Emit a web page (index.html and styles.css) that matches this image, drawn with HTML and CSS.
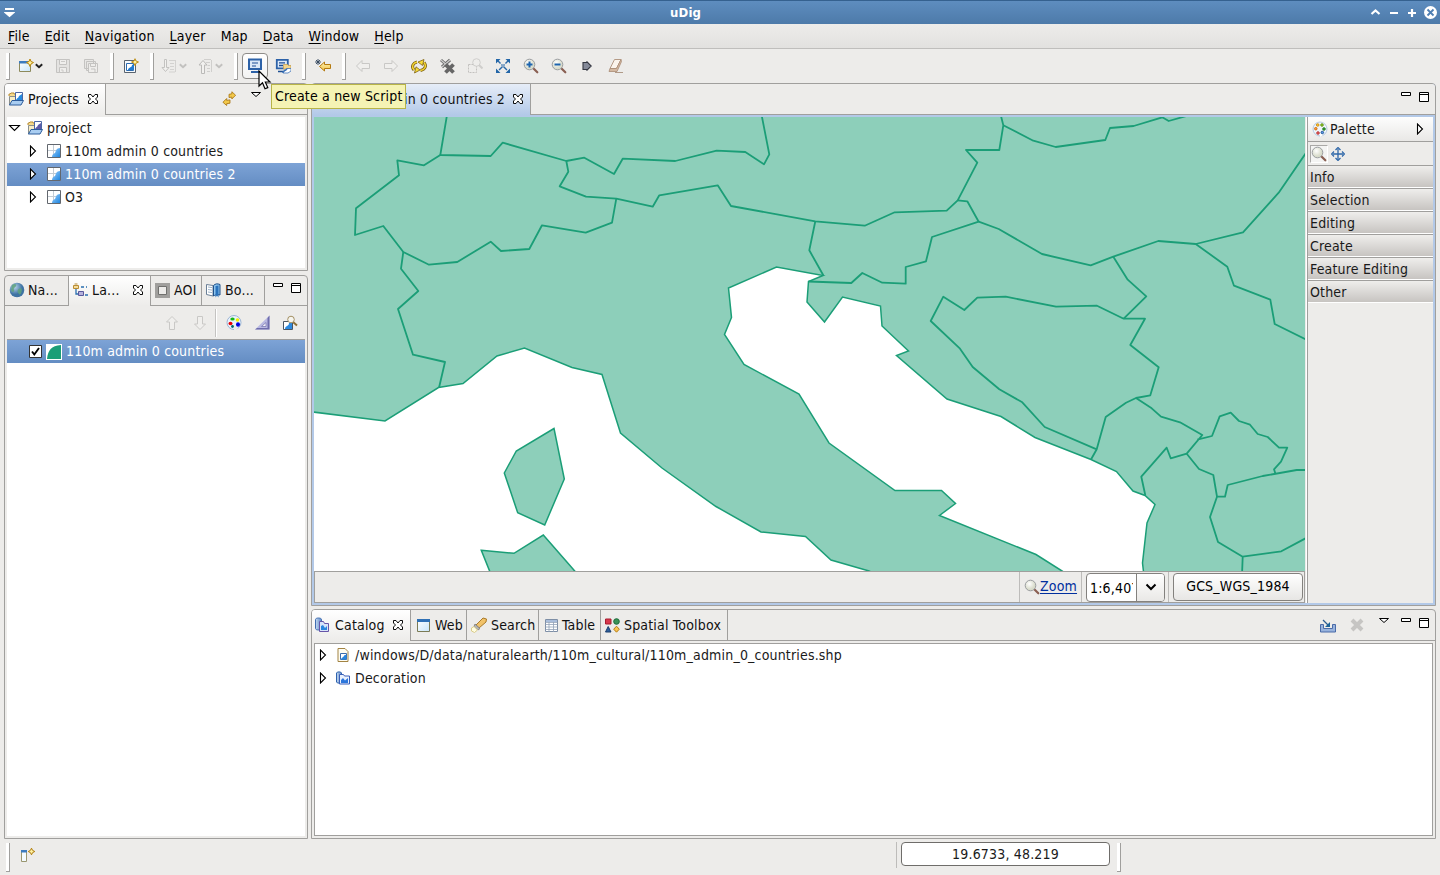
FILE: index.html
```html
<!DOCTYPE html>
<html lang="en">
<head>
<meta charset="utf-8">
<title>uDig</title>
<link rel="stylesheet" href="styles.css">
</head>
<body>
<svg class="defs" width="0" height="0">
  <defs>
    <linearGradient id="gBlue" x1="0" y1="0" x2="1" y2="1"><stop offset="0" stop-color="#9dd0fb"/><stop offset="1" stop-color="#1f86e0"/></linearGradient>
    <linearGradient id="gDoc" x1="0" y1="0" x2="1" y2="1"><stop offset="0" stop-color="#fff"/><stop offset="1" stop-color="#c9e6fa"/></linearGradient>
    <linearGradient id="gGold" x1="0" y1="0" x2="0" y2="1"><stop offset="0" stop-color="#fff3b8"/><stop offset="1" stop-color="#f0c040"/></linearGradient>
    <radialGradient id="gLens" cx=".4" cy=".35"><stop offset="0" stop-color="#fff"/><stop offset="1" stop-color="#d9dccb"/></radialGradient>
    <radialGradient id="gGlobe" cx=".35" cy=".3"><stop offset="0" stop-color="#b7d3ea"/><stop offset="1" stop-color="#3f73a3"/></radialGradient>
    <linearGradient id="gCyl" x1="0" x2="1" y1="0" y2="0"><stop offset="0" stop-color="#c6daf2"/><stop offset="1" stop-color="#5a85c4"/></linearGradient>
  </defs>
  <symbol id="close" viewBox="0 0 12 12"><path d="M1.500 1.500h2.500L6 4l2-2.500h2.500V4L8.500 6l2 2v2.500H8L6 8l-2 2.500H1.500V8l2-2-2-2z" fill="#fff" stroke="#000" stroke-width=".95"/></symbol>
  <symbol id="chev" viewBox="0 0 8 8"><path d="M.8 2.200 4 5.300 7.200 2.200" fill="none" stroke="currentColor" stroke-width="1.900"/></symbol>
  <symbol id="min" viewBox="0 0 12 12"><path d="M1.500 1.500h9v3h-9z" fill="#fff" stroke="#000"/></symbol>
  <symbol id="max" viewBox="0 0 12 12"><path d="M1.500 1.500h9v9h-9zM1 3.500h10" fill="#fff" stroke="#000"/></symbol>
  <symbol id="vmenu" viewBox="0 0 12 7"><path d="M1.500 1.500h9L6 5.500z" fill="#fff" stroke="#000"/></symbol>
  <symbol id="tri" viewBox="0 0 8 12"><path d="M1.500 1v10L6.500 6z" fill="#fff" stroke="#000" stroke-width="1.100"/></symbol>
  <symbol id="mapi" viewBox="0 0 14 14"><path d="M.5.500h13v13H.5z" fill="#fff" stroke="#62676e"/><path d="M6.500 1v12M1 6.500h12" stroke="#c3ccd5" fill="none"/><path d="M5 13c.3-2.500 1-3.200 2.200-3.600C8.800 8.800 8.500 7 9.200 6c.8-1.300 2-2 3.800-2v9z" fill="url(#gBlue)"/></symbol>
  <symbol id="folder" viewBox="0 0 16 14"><path d="M1 4V2h1l1-1h3v1h2v2" fill="#f5d98b" stroke="#b98d34"/><path d="M1.500 13V4.500h7V9z" fill="#f9edc4" stroke="#8a8f8c"/><path d="M7.500.500h7v8h-7z" fill="#fff" stroke="#4b66a4"/><path d="M8 9c0-3 2-2 3-5l3-2v7z" fill="var(--sea,#2689de)"/><path d="M1.500 13 4 8.500h11.500L13 13z" fill="#a9cdf1" stroke="#2c5c9b"/></symbol>
  <symbol id="lens" viewBox="0 0 16 16"><path d="m10.500 10.500 3.800 3.800" stroke="#8a5f52" stroke-width="2.200" stroke-linecap="round"/><circle cx="6.500" cy="6.500" r="5.300" fill="url(#gLens)" stroke="#9a9da0"/></symbol>
  <symbol id="palette" viewBox="0 0 16 16"><circle cx="8" cy="8" r="7" fill="#eef4fb" stroke="#b5c8e0"/><path d="M8 16V9l3 5z" fill="#fff"/><g stroke-width=".8"><circle cx="5.700" cy="4" r="1.300" fill="#f8c43c" stroke="#c80"/><circle cx="10" cy="4" r="1.300" fill="#9cd03e" stroke="#580"/><circle cx="3.800" cy="7.700" r="1.300" fill="#fb9a3c" stroke="#c60"/><circle cx="12" cy="8" r="1.300" fill="#44b944" stroke="#161"/><circle cx="6" cy="12" r="1.300" fill="#f46b6b" stroke="#a22"/><circle cx="10.300" cy="11.500" r="1.300" fill="#589ae8" stroke="#148"/></g></symbol>
  <symbol id="floppy" viewBox="0 0 16 16"><path d="M1.500 1.500h13v13h-13z" fill="#e4e3e1" stroke="#c4c3c1"/><path d="M4.500 1.500h7v5h-7zM4.500 9.500h7v5h-7z" fill="#efeeec" stroke="#c4c3c1"/><path d="M6 3.500h4M6 12h2v2" stroke="#cbcac8" fill="none"/></symbol>
  <symbol id="arrowL" viewBox="0 0 16 16"><path d="M1.500 8 7 2.500V5.500h7.500v5H7v3z" fill="#f0efed" stroke="#c9c8c6"/></symbol>
  <symbol id="sync" viewBox="0 0 16 16"><path d="M14.500 4.500 10.500 8.500V6.500L7.500 7V3.500l3-.5V.8zM1 12l4-4v2l3.500-.5V13L5 13.500v2z" fill="#f2c84a" stroke="#a97512" stroke-width=".9"/></symbol>
  <symbol id="catalog" viewBox="0 0 16 16"><path d="M1.500 2.500c0-2 6-2 6 0v9c0 2-6 2-6 0z" fill="url(#gCyl)" stroke="#3f6db0"/><path d="M5.500 4.500h4l1 2h4v8h-9z" fill="#d8e4fa" stroke="#6655a8"/><path d="M7 13V9l2-1 2 3 2-2v4z" fill="#2b86de"/></symbol>
</svg>

<div class="app">
  <header class="titlebar">
    <svg class="wmenu" width="11" height="10" viewBox="0 0 11 10"><path d="M1 1h9M2 5l3.500 3L9 5z" stroke="#fff" stroke-width="1.800" fill="#fff"/></svg>
    <span class="wtitle">uDig</span>
    <svg class="wbtns" width="68" height="16" viewBox="0 0 68 16"><g fill="none" stroke="#fff" stroke-width="2.200"><path d="M1.500 9 5.500 5.500l4 3.500M20 8h8M38 8h8M42 4v8"/></g><circle cx="60.500" cy="7.500" r="6.500" fill="#fff"/><path d="m57.500 4.500 6 6m0-6-6 6" stroke="#4e7fb3" stroke-width="1.800"/></svg>
  </header>

  <nav class="menubar">
    <span><u>F</u>ile</span><span><u>E</u>dit</span><span><u>N</u>avigation</span><span><u>L</u>ayer</span><span>Map</span><span><u>D</u>ata</span><span><u>W</u>indow</span><span><u>H</u>elp</span>
  </nav>

  <div class="toolbar">
    <i class="grip"></i>
    <div class="drop"><svg width="16" height="16" viewBox="0 0 16 16"><path d="M1.500 3.500h11v10h-11z" fill="url(#gDoc)" stroke="#8d8a5c"/><path d="M1 3h9v2.500H1z" fill="#3c7cbf"/><path d="m12 1 1 2.500L15.500 4.500 13 6l-1 2.500L11 6 8.500 4.500 11 3.500z" fill="#fdf0a0" stroke="#b8860b"/></svg><svg class="c" width="8" height="8"><use href="#chev"/></svg></div>
    <div class="tb"><svg width="16" height="16"><use href="#floppy"/></svg></div>
    <div class="tb"><svg width="16" height="16" viewBox="0 0 16 16"><path d="M1.500 1.500h9v9h-9zM3.500 3.500h9v9h-9z" fill="#e8e7e5" stroke="#c4c3c1"/><path d="M5.500 5.500h9v9h-9zM7.500 5.500h5v3h-5zM8 11h4v3" fill="#eeedeb" stroke="#c4c3c1"/></svg></div>
    <i class="grip"></i>
    <div class="tb"><svg width="16" height="16" viewBox="0 0 16 16"><path d="M1.500 2.500h11v12h-11z" fill="#f6fafd" stroke="#59636f"/><path d="M3.500 5.500h7v7h-7z" fill="#fff" stroke="#2c6bb0"/><path d="M5 12c0-3 4-2 4-5l2-1v6z" fill="#1f7ad0"/><path d="m12 .7 1 2.300 2.500 1L13 5.200l-1 2.500-1-2.500L8.500 4 11 3z" fill="#fdf0a0" stroke="#b8860b" stroke-width=".9"/></svg></div>
    <i class="grip"></i>
    <div class="drop off"><svg width="16" height="16" viewBox="0 0 16 16"><path d="M3.500 1.500h2v8h2.500l-3.500 4-3.500-4h2.500z" fill="#f2f1ef" stroke="#c3c2c0"/><path d="M8 2.500h6M9 5.500h4M9 8.500h4M9 11.500h4M8 14h6M14.500 2v12" stroke="#d3d2d0"/></svg><svg class="c" width="8" height="8"><use href="#chev"/></svg></div>
    <div class="drop off"><svg width="16" height="16" viewBox="0 0 16 16"><path d="M4.500 15.500h3V7H10L6 2.500 2 7h2.500z" fill="#f2f1ef" stroke="#bbbab8"/><path d="M7 1.500h7M9 4.500h4M10.500 7.500H13M10 10.500h3M10 13.500h3M14.500 2v12" stroke="#d0cfcd"/></svg><svg class="c" width="8" height="8"><use href="#chev"/></svg></div>
    <i class="grip"></i>
    <div class="tb hot"><svg width="16" height="16" viewBox="0 0 16 16"><path d="M2 1.500h12v9.500H2z" fill="#dce9f8" stroke="#2d62a8" stroke-width="2"/><path d="M5 5h6M5 8h4" stroke="#1f4f94" stroke-width="1.200"/><path d="M4 14h9" stroke="#2d62a8" stroke-width="2"/></svg></div>
    <div class="tb"><svg width="16" height="16" viewBox="0 0 16 16"><path d="M1.800 1.800h11v8.500h-11z" fill="#dce9f8" stroke="#2d62a8" stroke-width="1.800"/><path d="M4 4.800h6M4 7.500h4M3 13.500h5" stroke="#1f4f94" stroke-width="1.300"/><path d="M8.500 6.500h4l1 1H16v3.500H8.500z" fill="#f3d58c" stroke="#c29a45" stroke-width=".7"/><path d="M8 15c0-3.500 3-1.500 4-4.500h4V13l-3 2z" fill="#fff" stroke="#3f74b8" stroke-width=".8"/><path d="M8 15c0-3.500 3-1.500 4-4.500" fill="none" stroke="#3f74b8" stroke-width="1.500"/></svg></div>
    <i class="grip"></i>
    <div class="tb"><svg width="18" height="16" viewBox="0 0 18 16"><path d="m5.500 8.500 5-4.500v2.500h6v4h-6V13z" fill="url(#gGold)" stroke="#b57a10"/><path d="M4 1v6M1 4h6M2 2l4 4m0-4L2 6" stroke="#31465e" stroke-width=".9"/></svg></div>
    <i class="grip"></i>
    <div class="tb"><svg width="16" height="16"><use href="#arrowL"/></svg></div>
    <div class="tb"><svg class="flip" width="16" height="16"><use href="#arrowL"/></svg></div>
    <div class="tb"><svg width="18" height="16" viewBox="0 0 18 16"><g fill="none"><path d="M4 12C1 8.500 3 5 7 4M14 4.500c3 3.500 1 7-3.500 8" stroke="#7d6112" stroke-width="3"/><path d="M4 12C1 8.500 3 5 7 4M14 4.500c3 3.500 1 7-3.500 8" stroke="#f5d632" stroke-width="1.400"/></g><path d="m14 1.500-1.500 6-4.500-3.500zM4.500 15 6 8.800l4 3.200z" fill="#f7dc3a" stroke="#7d6112" stroke-width=".8"/></svg></div>
    <div class="tb"><svg width="17" height="16" viewBox="0 0 17 16"><path d="m2 2 9 8m0-8-8 7" stroke="#666" stroke-width="3"/><path d="m2 2 9 8m0-8-8 7" stroke="#ccc" stroke-width="1.300"/><path d="m6.500 6.500 8 8m0-8-8 8" stroke="#666" stroke-width="3.800"/></svg></div>
    <div class="tb"><svg width="16" height="16" viewBox="0 0 16 16"><path d="M1.500 6.500h8v8h-8z" fill="#eeedeb" stroke="#c2c1bf" stroke-dasharray="2 1"/><circle cx="9.500" cy="4.500" r="3.800" fill="#eeedeb" stroke="#cfcecc"/><path d="m12 7 3.500 3.500" stroke="#cfcecc" stroke-width="2"/></svg></div>
    <div class="tb"><svg width="16" height="16" viewBox="0 0 16 16"><path d="m2 2 12 12M14 2 2 14" stroke="#2b69a8" stroke-width="1.400" stroke-dasharray="5 1.300 1.500 1.300"/><path d="M1 1h4.500L1 5.500zM15 1v4.500L10.500 1zM1 15v-4.500L5.500 15zM15 15h-4.500l4.500-4.500z" fill="#2366a8"/></svg></div>
    <div class="tb"><svg width="16" height="16" viewBox="0 0 16 16"><use href="#lens"/><path d="M3.500 6.500h6M6.500 3.500v6" stroke="#1d64ad" stroke-width="2"/></svg></div>
    <div class="tb"><svg width="16" height="16" viewBox="0 0 16 16"><use href="#lens"/><path d="M3.500 6.500h6" stroke="#1d64ad" stroke-width="2"/></svg></div>
    <div class="tb"><svg width="10" height="10" viewBox="0 0 10 10"><path d="M1 1.500h4V.8L9.200 5 5 9.200v-.7H1z" fill="#858a99" stroke="#343741" stroke-width="1.100"/></svg></div>
    <div class="tb"><svg width="16" height="16" viewBox="0 0 16 16"><path d="M7.500 1.500h6.500l-4.500 9H3z" fill="#fbf4ec" stroke="#b49a86"/><path d="M3 10.500h6.500L14 1.500l.5 2L10 13.500H2z" fill="#d4b9a2" stroke="#a98b75" stroke-width=".8"/><path d="M8 14.500h8" stroke="#b09a88"/></svg></div>
  </div>

  <main class="work">
    <div class="left">
      <section class="panel projects">
        <div class="tabs">
          <div class="tab on"><svg width="16" height="14"><use href="#folder"/></svg><span>Projects</span><svg class="x" width="12" height="12"><use href="#close"/></svg></div>
          <div class="tools"><svg class="sync" width="15" height="15"><use href="#sync"/></svg><svg class="vm" width="12" height="7"><use href="#vmenu"/></svg></div>
        </div>
        <div class="tree">
          <div class="row root"><svg class="t" width="13" height="8" viewBox="0 0 13 8"><path d="M1.500 1.500h10l-5 5z" fill="#fff" stroke="#000" stroke-width="1.100"/></svg><svg class="ic" width="16" height="14"><use href="#folder"/></svg><span>project</span></div>
          <div class="row"><svg class="t" width="8" height="12"><use href="#tri"/></svg><svg class="ic" width="14" height="14"><use href="#mapi"/></svg><span>110m admin 0 countries</span></div>
          <div class="row sel"><svg class="t" width="8" height="12"><use href="#tri"/></svg><svg class="ic" width="14" height="14"><use href="#mapi"/></svg><span>110m admin 0 countries 2</span></div>
          <div class="row"><svg class="t" width="8" height="12"><use href="#tri"/></svg><svg class="ic" width="14" height="14"><use href="#mapi"/></svg><span>O3</span></div>
        </div>
      </section>

      <section class="panel layers">
        <div class="tabs">
          <div class="tab t-na"><svg width="16" height="16" viewBox="0 0 16 16"><circle cx="8" cy="8" r="7.300" fill="url(#gGlobe)"/><path d="M3 3c3-2 5-1 4 1S4 6 5 8s-2 3-3 0zM9.500 7c3-2 4 0 3 3s-2 3-3 1.500-1.500-2.500 0-4.500z" fill="#5fa37c" opacity=".85"/></svg><span>Na...</span></div>
          <div class="tab on t-la"><svg width="16" height="14" viewBox="0 0 16 14"><path d="M.5 2.500h5v3h-5z" fill="#f6dc9b" stroke="#b98d34"/><path d="M1.500 1h3" stroke="#b98d34"/><path d="M3 6v5h3M8 4h3m2 0h1M12 12h3" stroke="#2a6fb0" fill="none" stroke-width="1.300"/><path d="M5.500 8.500h5v4h-5z" fill="#b5b1dc" stroke="#59589b"/></svg><span>La...</span><svg class="x" width="12" height="12"><use href="#close"/></svg></div>
          <div class="tab t-aoi"><svg width="15" height="15" viewBox="0 0 15 15"><path d="M0 0h15v15H0z" fill="#a09f9d"/><path d="M3.500 3.500h8v8h-8z" fill="#ecebe9" stroke="#70706e"/></svg><span>AOI</span></div>
          <div class="tab t-bo"><svg width="15" height="15" viewBox="0 0 15 15"><path d="M.5 1.500 7 2.500V13L.5 11.500z" fill="#fff" stroke="#6a7f96"/><path d="M2 4l4 .6M2 6.500l4 .6M2 9l4 .6" stroke="#9db3c9"/><path d="M7.500 2.500c2-2 4-2 6.500-1v10.500c-3-1-5 0-6.500 1z" fill="#8cc4ef" stroke="#1f4f87"/><path d="M9.500 3v11.500l1.500-2 1.500 2V2.500z" fill="#2a72bb"/></svg><span>Bo...</span></div>
          <div class="tools"><svg width="12" height="12"><use href="#min"/></svg><svg class="mx" width="12" height="12"><use href="#max"/></svg></div>
        </div>
        <div class="subbar">
          <svg class="up" width="16" height="16"><use href="#arrowL"/></svg>
          <svg class="down" width="16" height="16"><use href="#arrowL"/></svg>
          <i class="sep"></i>
          <svg class="pal" width="16" height="16" viewBox="0 0 16 16"><circle cx="8" cy="7.500" r="7" fill="#eaf2fb" stroke="#9cb4d4"/><path d="M8 16V9l4 5z" fill="#ecebe9"/><ellipse cx="4.500" cy="8.500" rx="2" ry="1.800" fill="#e80000"/><ellipse cx="6.500" cy="4" rx="2.200" ry="1.600" fill="#16b616"/><circle cx="11.500" cy="5" r="1.800" fill="#f4ee00"/><ellipse cx="12" cy="9.500" rx="2" ry="2.300" fill="#0000e0"/><circle cx="6.500" cy="11.500" r="1.400" fill="#006868"/></svg>
          <svg class="sq" width="17" height="16" viewBox="0 0 17 16"><path d="M15.500.500v14H1z" fill="#b9b9e2"/><path d="M15.500.500v14H1l2-1.500h10.500V3z" fill="#6e6cac"/><path d="M12 7.500v4H7.500z" fill="#f4f4f8" stroke="#7c7ab4" stroke-width=".8"/></svg>
          <svg class="zl" width="16" height="16" viewBox="0 0 16 16"><path d="M1.500 6.500h9v8h-9z" fill="#fff" stroke="#4a5664"/><path d="M3 14c0-4 4-2 4-6h3v6z" fill="#2c8ae0"/><path d="m11 7 4 3.500" stroke="#8f7035" stroke-width="2"/><circle cx="9" cy="4.500" r="3.300" fill="#f6f5ee" stroke="#a38f63"/></svg>
        </div>
        <div class="tree">
          <div class="row sel"><svg class="chk" width="13" height="13" viewBox="0 0 13 13"><path d="M.5.500h12v12H.5z" fill="#fff" stroke="#333"/><path d="m3 6.500 2.300 3L10 3" fill="none" stroke="#000" stroke-width="1.900"/></svg><svg class="ic" width="16" height="16" viewBox="0 0 16 16"><path d="M0 0h16v16H0z" fill="#fff"/><path d="M1 15C2 6 5 2 15 1v14z" fill="#1b9e77"/></svg><span>110m admin 0 countries</span></div>
        </div>
      </section>
    </div>

    <div class="right">
      <section class="panel editor">
        <div class="tabs">
          <div class="tab blue"><svg width="14" height="14"><use href="#mapi"/></svg><span>110m admin 0 countries 2</span><svg class="x" width="12" height="12"><use href="#close"/></svg></div>
          <div class="tools"><svg width="12" height="12"><use href="#min"/></svg><svg class="mx" width="12" height="12"><use href="#max"/></svg></div>
        </div>
        <div class="edbody">
          <div class="mapcol">
            <svg class="map" viewBox="314 117 991 454">
              <g fill="#8dcfba" stroke="#1b9e77" stroke-width="1.500">
                <path d="M309 411.500 385 421 438.500 387.500 463 383.500 497 356 524.500 348 572 367.500 602 374.500 620.500 433 662 468 716 506.500 761 532 805.500 536.500 831 560 869 571 880 576H1070L1062 571 1036 554.500 939.500 515.500 955.500 503.500 941.500 490.500H895L829 443 799 394 744 364.500 724.500 334.500 731.500 317.500 728.500 288 776.500 267 823 275.500 808.500 281.500 807 302 824.500 322 842.500 297 880.500 306 882 326 908.500 351 896.500 355.500 947 399 1001 416.500 1035 437.500 1091 459.500 1116.500 471.500 1133 491 1145 495.500 1155 504.500 1147 523 1142.500 563 1144 576H1312V110H305z"/>
                <path d="M554 428.500 516.300 451 504.300 473 517.700 512.700 544.700 525 564.300 479z"/>
                <path d="M481.300 550.300 514 553.300 543.300 535 580 577H492z"/>
              </g>
              <g fill="none" stroke="#1b9e77" stroke-width="1.800" stroke-linejoin="round">
                <path d="M447.500 112 440.300 155 490.700 156 502.700 142.700 566.300 161 584.300 157.700 614 174 622.700 158.700 675.300 161 716.700 150.700 745.300 152 764 164.300 769.300 154.300 761 112"/>
                <path d="M440.300 155 424 165.300 397.300 160.300 399 175.300 356 208.300 355 235 383.300 226 403.300 252 429 264.700 457.300 262 490.700 241.700 501 251 529.300 249 542 225.300 585.700 232.700 612 222.700 616.300 198.700"/>
                <path d="M566.300 161 568.300 171.700 559.700 186.300 586 196.700 616.300 198.700 652.700 206.700 659.300 195.300 717.700 185.300 731 206 815.300 221.300 864.700 225.700 894.700 212.300 946.700 210.700 957.700 200.300 977.300 162.700 966 150H999.300L1003.300 125.300 1000 112"/>
                <path d="M403.300 252 401 268.700 418.300 291 398 309 413 354.700 445 362 439 387.700M815.300 221.300 809.300 250.300 823.300 275.300M808.500 281.500 851.300 283 862.300 273 882.300 282.700 905.700 283.700V267L926 261.300 932 237 978.700 221.700 967.300 201.300 957.700 200.300"/>
                <path d="M978.700 221.700 998.700 229 1042 254 1090.700 265.300 1113.300 256.700 1158.300 241 1195.700 244 1243 232.300 1278.700 192.700 1308 150M1003.300 125.300 1033.300 140.700 1055.700 147 1105.300 140 1110 128 1133.700 126 1162.300 117.300 1168.700 121 1190 115"/>
                <path d="M1195.700 244 1227.300 266.700 1234 285.700 1270.300 299.700 1274.700 324 1308 340.500M1113.300 256.700 1127.700 279.700 1146.300 296.300 1123.700 318.700"/>
                <path d="M1123.700 318.700 1097 305.700 1056 306.700 1005.700 296.700 977.300 297.700 964.300 310 943.300 296.700 930.700 321 960 348.700 972.700 367 999.300 389.300 1022.300 402.300 1044.700 427 1096.700 449.300 1105.700 417 1126 402.700 1136 398 1150.300 395.300 1158.700 367.300 1130.300 345 1145 318.700zM1096.700 449.300 1091 459.500"/>
                <path d="M1136 398 1151.700 408.300 1161 416.700 1180 422.300 1202.300 435 1186.700 453.700 1170.700 458.300 1166.700 447.700 1141.300 476.700 1145.300 495.300M1197.300 439.700 1212 436 1219.700 416.300 1230.700 412.700 1239 421 1250 424.700 1257.700 434 1267.700 437 1279 447.700H1287.300L1281 461.700 1274 469.300 1275.300 473.300"/>
                <path d="M1186.700 453.700 1199 469 1213.300 475 1217 496.700H1225L1227.700 485 1262.700 476 1296.700 470H1308M1217 496.700 1210 517 1218 542 1242.700 556.700 1281.300 551.300 1308 537M1242.700 556.700 1242 575"/>
              </g>
            </svg>
            <div class="mapbar">
              <div class="zoomlink"><svg width="16" height="16"><use href="#lens"/></svg><span>Zoom</span></div>
              <div class="cell c1"><div class="combo"><div class="val"><div>1:6,407</div></div><div class="arr"><svg width="14" height="10" viewBox="0 0 14 10"><path d="m2.500 2.500 4.500 4.500 4.500-4.500" fill="none" stroke="#000" stroke-width="2"/></svg></div></div></div>
              <div class="cell c2"><div class="crs">GCS_WGS_1984</div></div>
            </div>
          </div>
          <aside class="pal-side">
            <div class="pal-head"><svg width="16" height="16"><use href="#palette"/></svg><span>Palette</span><svg class="t" width="8" height="12"><use href="#tri"/></svg></div>
            <div class="pal-tools"><div class="pressed"><svg width="16" height="16"><use href="#lens"/></svg></div><svg width="14" height="14" viewBox="0 0 14 14"><path d="M7 2v10M2 7h10" stroke="#2d66a8" stroke-width="1.300"/><path d="M4.500 3 7 .5 9.500 3M4.500 11 7 13.500 9.500 11M3 4.500.500 7 3 9.500M11 4.500 13.500 7 11 9.500" fill="none" stroke="#2d66a8" stroke-width="1.200"/></svg></div>
            <div class="drawer">Info</div><div class="drawer">Selection</div><div class="drawer">Editing</div><div class="drawer">Create</div><div class="drawer">Feature Editing</div><div class="drawer">Other</div>
          </aside>
        </div>
      </section>

      <section class="panel catalog">
        <div class="tabs">
          <div class="tab on t-cat"><svg width="16" height="16"><use href="#catalog"/></svg><span>Catalog</span><svg class="x" width="12" height="12"><use href="#close"/></svg></div>
          <div class="tab t-web"><svg width="13" height="13" viewBox="0 0 13 13"><path d="M.5.500h12v12H.5z" fill="url(#gDoc)" stroke="#7b7b55"/><path d="M0 0h13v3H0z" fill="#2f70b5"/></svg><span>Web</span></div>
          <div class="tab t-search"><svg width="16" height="16" viewBox="0 0 16 16"><path d="m5 8 7-7 3.500 1L15 5 8 11z" fill="#f1c269" stroke="#a97a2a"/><path d="m4 7 5 4.500-2 1.500-4-3.500z" fill="#b3b3b3" stroke="#888"/><path d="M3 9.500 6.500 13 3.500 15.500.5 14V11z" fill="#fffde0" stroke="#d9cb8a"/></svg><span>Search</span></div>
          <div class="tab t-table"><svg width="13" height="13" viewBox="0 0 13 13"><path d="M.5.500h12v12H.5z" fill="#fff" stroke="#7e8fa6"/><path d="M1 1h11v2H1z" fill="#a9bddb"/><path d="M.5 3.500h12M.5 5.500h12M.5 8h12M.5 10.500h12M4 3v10M8.500 3v10" stroke="#93a2b8" stroke-width=".8"/></svg><span>Table</span></div>
          <div class="tab t-tool"><svg width="15" height="15" viewBox="0 0 15 15"><path d="M.5 1h5.500v5H.5z" fill="#d8394d" stroke="#a71c30"/><circle cx="11.500" cy="3.500" r="2.800" fill="#3b9258" stroke="#1d6b38"/><path d="M3.200 8.500 6 14H.5z" fill="#2d5f9c" stroke="#1b3d6d"/><path d="m11.500 8.200 2.800 3-2.800 3-2.800-3z" fill="#f9c552" stroke="#b47b14"/></svg><span>Spatial Toolbox</span></div>
          <div class="tools"><svg class="imp" width="18" height="14" viewBox="0 0 18 14"><path d="M1.500 5.500h3v4h9v-4h3v7.500h-15z" fill="#98b3dd" stroke="#4a6ba8"/><path d="m4 1 6 6" stroke="#2a5c91" stroke-width="1.300"/><path d="M11 3v5H6z" fill="#1c6399"/></svg><svg class="del" width="14" height="14" viewBox="0 0 14 14"><path d="m2 2 10 10M12 2 2 12" stroke="#c6c5c3" stroke-width="4"/></svg><svg class="vm" width="12" height="7"><use href="#vmenu"/></svg><svg class="mn" width="12" height="12"><use href="#min"/></svg><svg class="mx" width="12" height="12"><use href="#max"/></svg></div>
        </div>
        <div class="tree framed">
          <div class="row"><svg class="t" width="8" height="12"><use href="#tri"/></svg><svg class="ic" width="14" height="14" viewBox="0 0 14 14"><path d="M2 .5h7l3 3v10H2z" fill="#fffdf2" stroke="#a28342"/><path d="M4.500 5.500h6v6h-6z" fill="#fff" stroke="#3b6cab"/><path d="M5 11.500c1-3 3-2 3-4l2.500-1v5z" fill="#2a85dc"/></svg><span>/windows/D/data/naturalearth/110m_cultural/110m_admin_0_countries.shp</span></div>
          <div class="row"><svg class="t" width="8" height="12"><use href="#tri"/></svg><svg class="ic" width="14" height="14" viewBox="0 0 14 14"><path d="M.5 2c0-1.500 5-1.500 5 0v9c0 1.500-5 1.500-5 0z" fill="url(#gCyl)" stroke="#2d63ae"/><path d="M3.500 3.500h4l1 1.500h5v8h-10z" fill="#e9f1fd" stroke="#3a5fb8"/><path d="M5 12V9l2-2 2 2.500 3-2.500v5z" fill="#2b76dc"/></svg><span>Decoration</span></div>
        </div>
      </section>
    </div>
  </main>

  <footer class="status">
    <i class="grip"></i>
    <svg class="fast" width="16" height="16" viewBox="0 0 16 16"><path d="M1.500 3.500h5v11h-5z" fill="#f3fbff" stroke="#9a9670"/><path d="M1 3h6v2.500H1z" fill="#3c7cbf"/><path d="m11.500 1.200 1.100 2.200 2.200 1.100-2.200 1.100-1.100 2.200-1.100-2.200-2.200-1.100 2.200-1.100z" fill="#fdf0a0" stroke="#b07c0b"/></svg>
    <i class="line"></i>
    <div class="coords">19.6733, 48.219</div>
    <i class="grip g2"></i>
  </footer>

  <div class="tooltip">Create a new Script</div>
  <svg class="cursor" width="14" height="21" viewBox="0 0 14 21"><path d="M1 1v15l3.500-3.300L7 18.800l2.800-1.200L7.300 12H12z" fill="#fff" stroke="#000" stroke-width="1.200"/></svg>
</div>
</body>
</html>
```
FILE: styles.css
```css
* { box-sizing: border-box; }
html, body { margin: 0; height: 100%; overflow: hidden; }
body {
  font-family: "DejaVu Sans Condensed", "DejaVu Sans", sans-serif;
  font-stretch: condensed;
  font-size: 14px;
  letter-spacing: .18px;
  line-height: 16px;
  color: #1a1a1a;
  background: #edecea;
  white-space: nowrap;
}
svg { display: block; flex: none; }
.defs { position: absolute; }
.app { position: relative; width: 1440px; height: 875px; display: flex; flex-direction: column; background: #edecea; }

/* window chrome */
.titlebar { height: 24px; display: flex; align-items: center; padding: 1px 2px 0 4px; background: linear-gradient(#5e8dbf, #4d7aa9); border-top: 1px solid #35618f; color: #fff; }
.wtitle { font-weight: bold; font-size: 13px; margin-left: 655px; }
.wbtns { margin-left: auto; }
.menubar { height: 25px; display: flex; gap: 15px; padding: 4px 8px 0; background: linear-gradient(#edecea, #e2e1df); border-bottom: 1px solid #bfbebc; color: #000; }
.menubar u { text-underline-offset: 2px; }

.toolbar { height: 34px; display: flex; align-items: center; padding-left: 1px; }
.grip { width: 12px; height: 26px; flex: none; display: block; }
.grip::before { content: ""; display: block; width: 3px; height: 26px; margin-left: 5px; background: #fff; border-right: 1px solid #a09f9d; border-bottom: 1px solid #a09f9d; }
.tb { width: 28px; height: 28px; display: flex; align-items: center; justify-content: center; flex: none; }
.hot { width: 26px; height: 26px; margin: 0 1px; background: linear-gradient(#fff, #f3f3f2); border: 1px solid #8e8c89; border-radius: 4px; }
.drop { width: 36px; display: flex; align-items: center; padding-left: 5px; gap: 1px; flex: none; color: #222; }
.off { color: #c2c1bf; gap: 2px; padding-left: 4px; }
.flip { transform: scaleX(-1); }

/* workbench */
.work { flex: 1; min-height: 0; display: flex; gap: 3px; padding: 0 4px; }
.left { width: 304px; display: flex; flex-direction: column; gap: 4px; }
.right { flex: 1; min-width: 0; display: flex; flex-direction: column; gap: 3px; }
.panel { border: 1px solid #a09f9d; border-radius: 4px 4px 0 0; display: flex; flex-direction: column; min-height: 0; overflow: hidden; }
.tabs { height: 31px; flex: none; display: flex; align-items: stretch; border-bottom: 1px solid #a09f9d; color: #111; }
.tab { display: flex; align-items: center; border-right: 1px solid #a09f9d; padding-left: 4px; flex: none; overflow: hidden; }
.tab span { margin-left: 4px; }
.tab .x { margin-left: 7px; }
.tab.on { background: linear-gradient(#fff, #edecea); margin-bottom: -1px; padding-bottom: 1px; }
.tools { display: flex; align-items: flex-start; margin-left: auto; padding-top: 7px; }

.projects { height: 188px; }
.projects .tab { width: 101px; padding-left: 3px; }
.projects .tab .x { margin-left: 8px; }
.projects .tools { padding-right: 45px; }
.projects .sync { margin-right: 13px; }
.tree { flex: 1; margin: 2px; background: #fff; min-height: 0; }
.row { height: 23px; display: flex; align-items: center; padding-left: 22px; }
.row .t { margin-top: -2px; }
.row .ic { margin-left: 10px; margin-top: -1px; }
.row span { margin-left: 4px; margin-top: -2px; }
.row.root { padding-left: 1px; }
.root .ic { margin-left: 6px; --sea: #5d5aa8; }
.sel { background: linear-gradient(#7da3d6, #648dc3); color: #fff; }

.layers { height: 564px; }
.layers .tabs { height: 30px; }
.layers .tab { padding-bottom: 1px; }
.layers .tab.on { padding-bottom: 2px; }
.t-na { width: 64px; }
.t-na span { margin-left: 3px; }
.t-la { width: 82px; }
.t-la span { margin-left: 3px; }
.t-la .x { margin-left: 12px; }
.t-aoi { width: 51px; }
.t-bo { width: 63px; }
.layers .tools { padding-right: 5px; padding-top: 6px; }
.mx { margin-left: 6px; }
.subbar { height: 33px; flex: none; display: flex; align-items: center; padding: 1px 9px 0 0; justify-content: flex-end; }
.up { transform: rotate(90deg); margin-right: 12px; }
.down { transform: rotate(-90deg); margin-right: 7px; }
.sep { width: 2px; height: 28px; background: #fff; border-left: 1px solid #c4c3c1; margin-right: 9px; }
.pal { margin-right: 12px; }
.sq { margin-right: 11px; }
.layers .tree { margin-top: 0; border-top: 1px solid #a09f9d; }
.layers .ic { margin-left: 4px; margin-top: 0; }

.editor { height: 523px; background: #b3c9e8; }
.editor .tabs { background: #edecea; }
.blue { width: 219px; margin-bottom: -1px; background: linear-gradient(#e6edf8, #b3c9e8); justify-content: flex-end; padding-right: 6px; padding-bottom: 1px; }
.editor .tools { padding-right: 5px; }
.edbody { flex: 1; min-height: 0; display: flex; margin: 2px; background: #edecea; }
.mapcol { width: 991px; display: flex; flex-direction: column; }
.map { width: 991px; height: 454px; background: #fff; }
.mapbar { height: 32px; border: 1px solid #a09f9d; display: flex; justify-content: flex-end; align-items: stretch; background: #edecea; }
.zoomlink { display: flex; align-items: center; width: 62px; border-left: 1px solid #bdbcba; padding-left: 4px; color: #002f9e; }
.zoomlink span { text-decoration: underline; text-underline-offset: 2px; margin-top: -2px; }
.cell { display: flex; align-items: center; border-left: 1px solid #bdbcba; padding-left: 4px; }
.c1 { width: 87px; }
.c2 { width: 136px; }
.combo { width: 79px; height: 29px; display: flex; border: 1px solid #83817e; border-radius: 4px; background: #fff; overflow: hidden; color: #000; }
.val { width: 50px; padding: 0 3px 0 3px; line-height: 28px; border-right: 1px solid #83817e; }
.val div { overflow: hidden; }
.arr { flex: 1; display: flex; align-items: center; justify-content: center; background: linear-gradient(#fff, #e9e8e6); }
.crs { width: 130px; height: 28px; border: 1px solid #83817e; border-radius: 4px; text-align: center; line-height: 24px; background: linear-gradient(#fff, #e7e6e4); color: #000; }

.pal-side { flex: 1; margin-left: 2px; border-left: 1px solid #a09f9d; box-shadow: -1px 0 #fff; }
.pal-head { height: 25px; display: flex; align-items: center; padding-left: 4px; background: linear-gradient(#fdfdfd, #e9e8e6); border-bottom: 1px solid #a09f9d; }
.pal-head span { margin-left: 2px; flex: 1; }
.pal-head .t { margin-right: 9px; }
.pal-tools { height: 23px; display: flex; align-items: center; gap: 3px; padding-left: 2px; }
.pressed { width: 18px; height: 18px; background: #f4f4f3; border: 1px solid #aaa9a7; border-right-color: #fff; border-bottom-color: #fff; }
.drawer { height: 23px; padding: 4px 2px; line-height: 15px; background: linear-gradient(#efeeec, #c7c4c1); border-top: 1px solid #a09f9d; border-bottom: 1px solid #fff; }

.catalog { height: 230px; }
.t-cat { width: 99px; padding-left: 2px; }
.t-cat span { margin-left: 5px; }
.t-web { width: 56px; padding-left: 6px; }
.t-web span { margin-left: 5px; }
.t-search { width: 72px; }
.t-search span { margin-left: 4px; }
.t-table { width: 62px; padding-left: 6px; }
.t-table span { margin-left: 4px; }
.t-tool { width: 127px; }
.catalog .tools { padding-right: 5px; }
.imp { margin: 2px 13px 0 0; }
.del { margin: 1px 14px 0 0; }
.catalog .vm { margin-right: 10px; }
.catalog .framed { border: 1px solid #a09f9d; }
.framed .row { padding-left: 4px; }
.framed .ic { margin-left: 9px; }
.framed span { margin-left: 5px; }

.status { height: 36px; display: flex; align-items: flex-start; padding: 3px 0 0 1px; }
.status .grip { padding-top: 1px; }
.status .grip::before { height: 28px; }
.fast { margin: 5px 0 0 7px; }
.line { width: 1px; height: 26px; background: #bdbcba; margin-left: 860px; }
.coords { width: 209px; height: 24px; margin-left: 4px; border: 1px solid #6f6d6a; border-radius: 4px; background: #fff; text-align: center; line-height: 23px; }
.g2 { margin-left: 2px; }

.tooltip { position: absolute; left: 271px; top: 84px; width: 135px; height: 25px; padding: 3px; background: #f5f3b4; border: 1px solid #b8b447; color: #000; }
.cursor { position: absolute; left: 258px; top: 70px; }
```
